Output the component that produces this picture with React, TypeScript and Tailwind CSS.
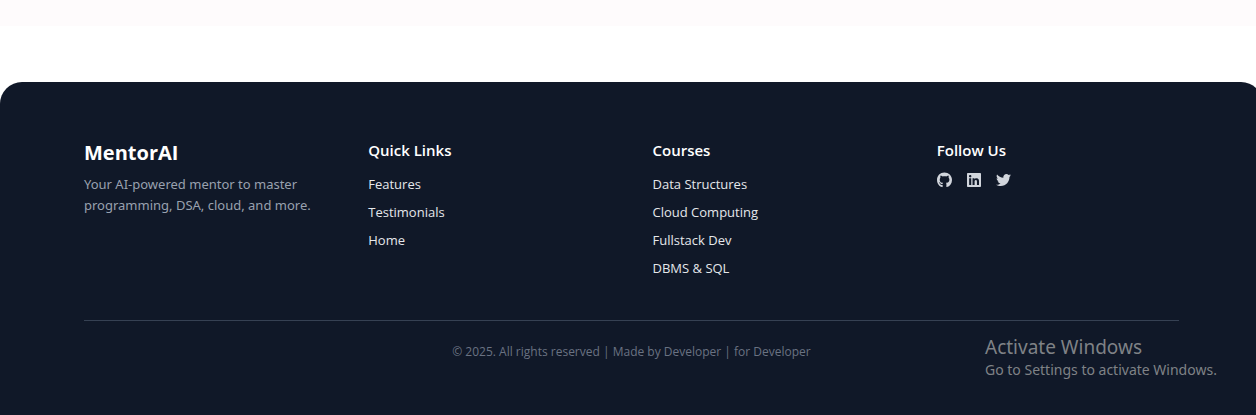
import { FaGithub, FaLinkedin, FaTwitter } from "react-icons/fa";

type LinkColumn = { title: string; links: { label: string; href: string }[] };

const columns: LinkColumn[] = [
  {
    title: "Quick Links",
    links: [
      { label: "Features", href: "#features" },
      { label: "Testimonials", href: "#testimonials" },
      { label: "Home", href: "#home" },
    ],
  },
  {
    title: "Courses",
    links: [
      { label: "Data Structures", href: "#data-structures" },
      { label: "Cloud Computing", href: "#cloud-computing" },
      { label: "Fullstack Dev", href: "#fullstack-dev" },
      { label: "DBMS & SQL", href: "#dbms-sql" },
    ],
  },
];

function FooterColumn({ title, links }: LinkColumn) {
  return (
    <nav aria-label={title}>
      <h3 className="text-[15px] leading-6 font-semibold text-white">{title}</h3>
      <ul className="mt-3 flex flex-col gap-2">
        {links.map((link) => (
          <li key={link.label} className="text-[13px] leading-5 text-gray-200">
            <a href={link.href} className="hover:text-white">
              {link.label}
            </a>
          </li>
        ))}
      </ul>
    </nav>
  );
}

function SocialLinks() {
  return (
    <div>
      <h3 className="text-[15px] leading-6 font-semibold text-white">Follow Us</h3>
      <div className="mt-[10px] flex items-center gap-[15px] text-gray-300">
        <a href="#github" aria-label="GitHub">
          <FaGithub className="h-4 w-[15px]" />
        </a>
        <a href="#linkedin" aria-label="LinkedIn">
          <FaLinkedin className="h-4 w-[14px]" />
        </a>
        <a href="#twitter" aria-label="Twitter">
          <FaTwitter className="h-4 w-[15px]" />
        </a>
      </div>
    </div>
  );
}

export default function App() {
  return (
    <div className="relative flex min-h-screen flex-col overflow-x-hidden bg-white font-['Open_Sans','Noto_Sans',sans-serif]">
      <div className="h-[26px] bg-[#fefbfc]" />
      <footer className="mt-14 w-[calc(100%+7px)] grow rounded-t-[22px] bg-gray-900 pt-14">
        <div className="mx-auto max-w-[1151px] px-7">
          <div className="grid grid-cols-4 gap-[42px]">
            <div>
              <h2 className="text-[20px] leading-[30px] font-bold text-white">MentorAI</h2>
              <p className="mt-[6px] font-['Noto_Sans',sans-serif] text-[13px] leading-[21px] text-gray-400">
                Your AI-powered mentor to master programming, DSA, cloud, and more.
              </p>
            </div>
            {columns.map((column) => (
              <FooterColumn key={column.title} {...column} />
            ))}
            <SocialLinks />
          </div>
          <div className="mt-[42px] border-t border-gray-700 pt-[21px] text-center">
            <p className="text-[12px] leading-5 text-gray-500">
              © 2025. All rights reserved | Made by Developer | for Developer
            </p>
          </div>
        </div>
      </footer>
      <aside className="pointer-events-none absolute right-[35px] bottom-[35px] w-[236px] font-['Noto_Sans',sans-serif] whitespace-nowrap text-[#7f8286]">
        <p className="text-[19px] leading-[25px]">Activate Windows</p>
        <p className="text-[14px] leading-5">Go to Settings to activate Windows.</p>
      </aside>
    </div>
  );
}
